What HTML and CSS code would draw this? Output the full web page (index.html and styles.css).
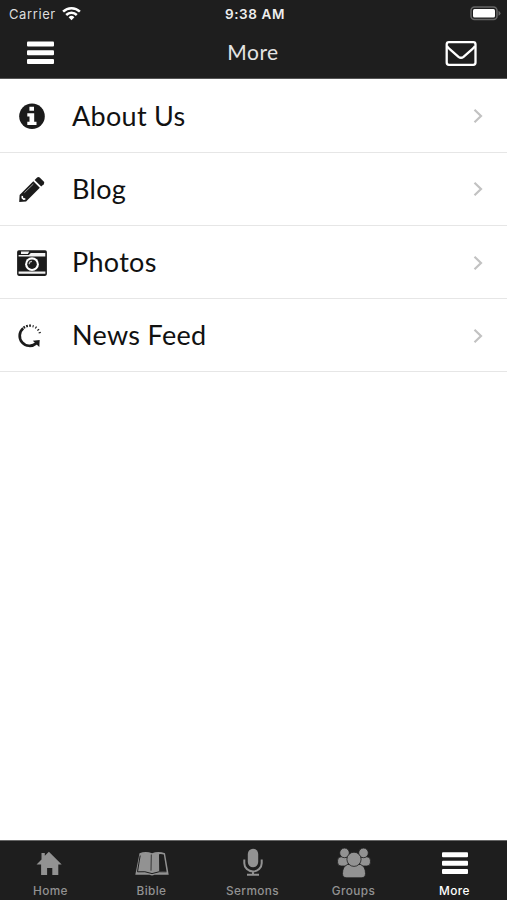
FILE: index.html
```html
<!DOCTYPE html>
<html lang="en">
<head>
    <meta charset="UTF-8">
    <meta name="viewport" content="width=device-width, initial-scale=1.0">
    <title>More</title>
    <link rel="stylesheet" href="styles.css">
</head>
<body>
    <header class="header">
        <div class="status">
            <div class="carrier">
                <span>Carrier</span>
                <svg width="19" height="14" viewBox="0 0 19 14" fill="none" stroke="#fff" stroke-width="2.5">
                    <path d="M1.1 4.700a12 12 0 0 1 16.8 0"/>
                    <path d="M4.2 8a7.6 7.6 0 0 1 10.6 0"/>
                    <path d="M6.6 10.2a4.2 4.2 0 0 1 5.8 0L9.5 13.2z" fill="#fff" stroke="none"/>
                </svg>
            </div>
            <span class="time">9:38 AM</span>
            <svg class="battery" width="31" height="15" viewBox="0 0 31 15">
                <rect x="1" y="1" width="26" height="12.5" rx="3.5" fill="#1e1e1e" stroke="#666" stroke-width="1.5"/>
                <rect x="3" y="3" width="22" height="8.5" rx="1.5" fill="#fff"/>
                <path d="M28.5 4.8q2 1 2 2.5t-2 2.5z" fill="#666"/>
            </svg>
        </div>
        <nav class="navbar">
            <svg width="27" height="24" viewBox="0 0 27 24" fill="#fff">
                <rect y="0.5" width="27" height="5" rx="1"/>
                <rect y="9.2" width="27" height="5" rx="1"/>
                <rect y="17.900" width="27" height="5" rx="1"/>
            </svg>
            <h1 class="title">More</h1>
            <svg width="32" height="26" viewBox="0 0 32 26" fill="none" stroke="#fff" stroke-width="2.3" stroke-linejoin="round">
                <rect x="1.7" y="2.2" width="28.8" height="22.6" rx="2.2"/>
                <path d="M2 6q1 1.800 3 3.300l8.500 7.500q2.500 2 5 0l8.500-7.500q2-1.500 3-3.300"/>
            </svg>
        </nav>
    </header>

    <main class="list">
        <a class="row">
            <svg class="icon" viewBox="0 0 32 32">
                <circle cx="16" cy="16.300" r="12.800" fill="#1b1b1b"/>
                <path d="M13.400 6.800h4.600v4h-4.600zM11.300 13.200h6.900v8.500h2.300v3.400h-9.200v-3.400h2.200v-5.200h-2.200z" fill="#fff"/>
            </svg>
            <span class="label">About Us</span>
            <svg class="chevron" viewBox="0 0 12 18"><path d="M2.500 2.700L9 9l-6.500 6.300"/></svg>
        </a>
        <a class="row">
            <svg class="icon" viewBox="0 0 32 32">
                <path d="M3.200 29l.4-7L17.300 8.300l6.500 6.500L10.100 28.500z" fill="#1b1b1b"/>
                <path d="M18.600 7l2.500-2.400q1.300-1.200 2.600 0l4 4q1.200 1.300 0 2.600l-2.500 2.400z" fill="#1b1b1b"/>
                <path d="M5.500 22.800l1.500.1.300 2 2 .3.100 1.500-2 .4-1.900-1.900z" fill="#fff"/>
                <path d="M8.400 19.700l9-8.700" stroke="#aaa" stroke-width=".9"/>
            </svg>
            <span class="label">Blog</span>
            <svg class="chevron" viewBox="0 0 12 18"><path d="M2.500 2.700L9 9l-6.500 6.300"/></svg>
        </a>
        <a class="row">
            <svg class="icon" viewBox="0 0 32 32">
                <rect x="1.100" y="3.300" width="29.800" height="25.600" rx="1.800" fill="#1b1b1b"/>
                <path d="M5 4.500h8.300l-1.500 2.400H5zM2.600 8h10.300l1.900-2h14.500v3.400H2.600zM2.600 24.500h26.800v2.200H2.600z" fill="#f2f2f2"/>
                <circle cx="16" cy="17.200" r="6.900" fill="#fff"/>
                <circle cx="16" cy="17.200" r="4.800" fill="#1b1b1b"/>
                <path d="M13.200 17.200a2.800 2.800 0 0 1 2.800-2.800" fill="none" stroke="#bbb" stroke-width="1.200"/>
            </svg>
            <span class="label">Photos</span>
            <svg class="chevron" viewBox="0 0 12 18"><path d="M2.500 2.700L9 9l-6.500 6.300"/></svg>
        </a>
        <a class="row">
            <svg class="icon" viewBox="0 0 32 32" fill="none" stroke="#1b1b1b">
                <path d="M7.200 8.200a9.200 9.200 0 1 0 13 15.200" stroke-width="2.700"/>
                <path d="M16.800 20.700l6.900-.8-.4 7z" fill="#1b1b1b" stroke="none"/>
                <path d="M7.600 7.800A9.400 9.400 0 0 1 15.200 5.800" stroke-width="2.400" stroke-dasharray="1.700 1.300"/>
                <path d="M16.600 6.100a10 10 0 0 1 7.600 9" stroke-width="2.200" stroke-dasharray="1.100 2"/>
            </svg>
            <span class="label">News Feed</span>
            <svg class="chevron" viewBox="0 0 12 18"><path d="M2.500 2.700L9 9l-6.500 6.300"/></svg>
        </a>
    </main>

    <footer class="tabs">
        <a class="tab">
            <svg width="36" height="34" viewBox="0 0 36 34" fill="currentColor">
                <path d="M15.900 4.700L28.700 17.500h-3.400V28h-6v-7h-5.200v7h-6V17.500H3.500l5-5V6h3.300v2.800z"/>
            </svg>
            <span>Home</span>
        </a>
        <a class="tab">
            <svg width="36" height="34" viewBox="0 0 36 34">
                <path d="M5.500 6.200q6.500-2.500 12.500.1 6-2.600 13-.1l3.700 21.600H20.500q-2.500 1.300-5 0H1.300z" fill="currentColor"/>
                <path d="M6.200 8.500Q4.700 17 3.500 24.800q7.500-1 14.500 1.800 7-2.800 14.500-1.800" fill="none" stroke="#1e1e1e" stroke-width="1"/>
                <path d="M17.300 7.500l-.3 16.200" stroke="#1e1e1e" stroke-width=".8"/>
                <path d="M25 7.200q2.500-.4 4.800.4l2.700 16.700q-3.800-.7-7.300-.1z" fill="#1e1e1e"/>
            </svg>
            <span>Bible</span>
        </a>
        <a class="tab">
            <svg width="36" height="34" viewBox="0 0 36 34">
                <rect x="12.800" y="1.700" width="10.400" height="18.600" rx="5.200" fill="currentColor"/>
                <path d="M9.300 12.500v3.800a8.700 8.200 0 0 0 17.400 0v-3.800M18 24.500v3.500M12 27.800h12" fill="none" stroke="currentColor" stroke-width="2"/>
            </svg>
            <span>Sermons</span>
        </a>
        <a class="tab">
            <svg width="36" height="34" viewBox="0 0 36 34" fill="currentColor" stroke="#1e1e1e" stroke-width=".8">
                <rect x="1.600" y="9.800" width="11" height="9.200" rx="3.500"/>
                <rect x="23.400" y="9.800" width="11" height="9.200" rx="3.500"/>
                <circle cx="8.500" cy="5.900" r="4.800"/>
                <circle cx="27.500" cy="5.900" r="4.800"/>
                <path d="M11.500 17.500h13q5 2 5 9 0 4.300-4.300 4.300H10.800q-4.300 0-4.300-4.300 0-7 5-9z"/>
                <circle cx="18" cy="12.300" r="7.100"/>
            </svg>
            <span>Groups</span>
        </a>
        <a class="tab active">
            <svg width="36" height="34" viewBox="0 0 36 34" fill="currentColor">
                <rect x="5" y="5.200" width="26" height="5" rx="1"/>
                <rect x="5" y="13.700" width="26" height="5" rx="1"/>
                <rect x="5" y="22.100" width="26" height="5" rx="1"/>
            </svg>
            <span>More</span>
        </a>
    </footer>
</body>
</html>
```
FILE: styles.css
```css
* {
    box-sizing: border-box;
}
body {
    margin: 0;
    height: 900px;
    display: flex;
    flex-direction: column;
    background-color: #fff;
    font-family: Lato, sans-serif;
    overflow: hidden;
}
svg {
    display: block;
    flex-shrink: 0;
}
.header {
    height: 79px;
    background-color: #1e1e1e;
    border-bottom: 1px solid #555;
    color: #fff;
}
.status {
    height: 27px;
    display: grid;
    grid-template-columns: 1fr auto 1fr;
    align-items: center;
    padding: 0 6px 0 9px;
    font-family: Inter, sans-serif;
    font-size: 13px;
}
.carrier {
    display: flex;
    align-items: center;
    gap: 6px;
    color: #ddd;
    letter-spacing: 0.6px;
}
.time {
    font-weight: 600;
    font-size: 13.5px;
    letter-spacing: 0.6px;
    color: #eee;
}
.battery {
    justify-self: end;
}
.navbar {
    height: 51px;
    display: grid;
    grid-template-columns: 1fr auto 1fr;
    align-items: center;
    padding: 0 30px 0 27px;
}
.navbar svg:last-child {
    justify-self: end;
}
.title {
    margin: 0;
    padding: 0 0 2px 2px;
    font-size: 21px;
    font-weight: 400;
    letter-spacing: 0.5px;
    color: #e4e4e4;
}
.list {
    flex: 1;
    padding-top: 0.6px;
}
.row {
    height: 73.2px;
    display: flex;
    align-items: center;
    padding: 1px 23px 0 16px;
    border-bottom: 1px solid #e6e6e6;
    color: #111;
}
.icon {
    width: 32px;
    height: 32px;
    margin-right: 24px;
}
.label {
    flex: 1;
    padding-bottom: 2px;
    font-size: 27px;
    letter-spacing: 0.3px;
}
.chevron {
    width: 12px;
    height: 18px;
    fill: none;
    stroke: #c2c2c2;
    stroke-width: 2.2;
}
.tabs {
    height: 60px;
    display: flex;
    padding-right: 2px;
    background-color: #1e1e1e;
    border-top: 1px solid #666;
    font-family: Inter, sans-serif;
    font-size: 11.8px;
    font-weight: 500;
    letter-spacing: 0.4px;
}
.tab {
    flex: 1;
    display: flex;
    flex-direction: column;
    align-items: center;
    padding-top: 6px;
    color: #929292;
}
.tab span {
    padding-top: 1px;
    line-height: 18px;
}
.tab.active {
    color: #fff;
}
```
